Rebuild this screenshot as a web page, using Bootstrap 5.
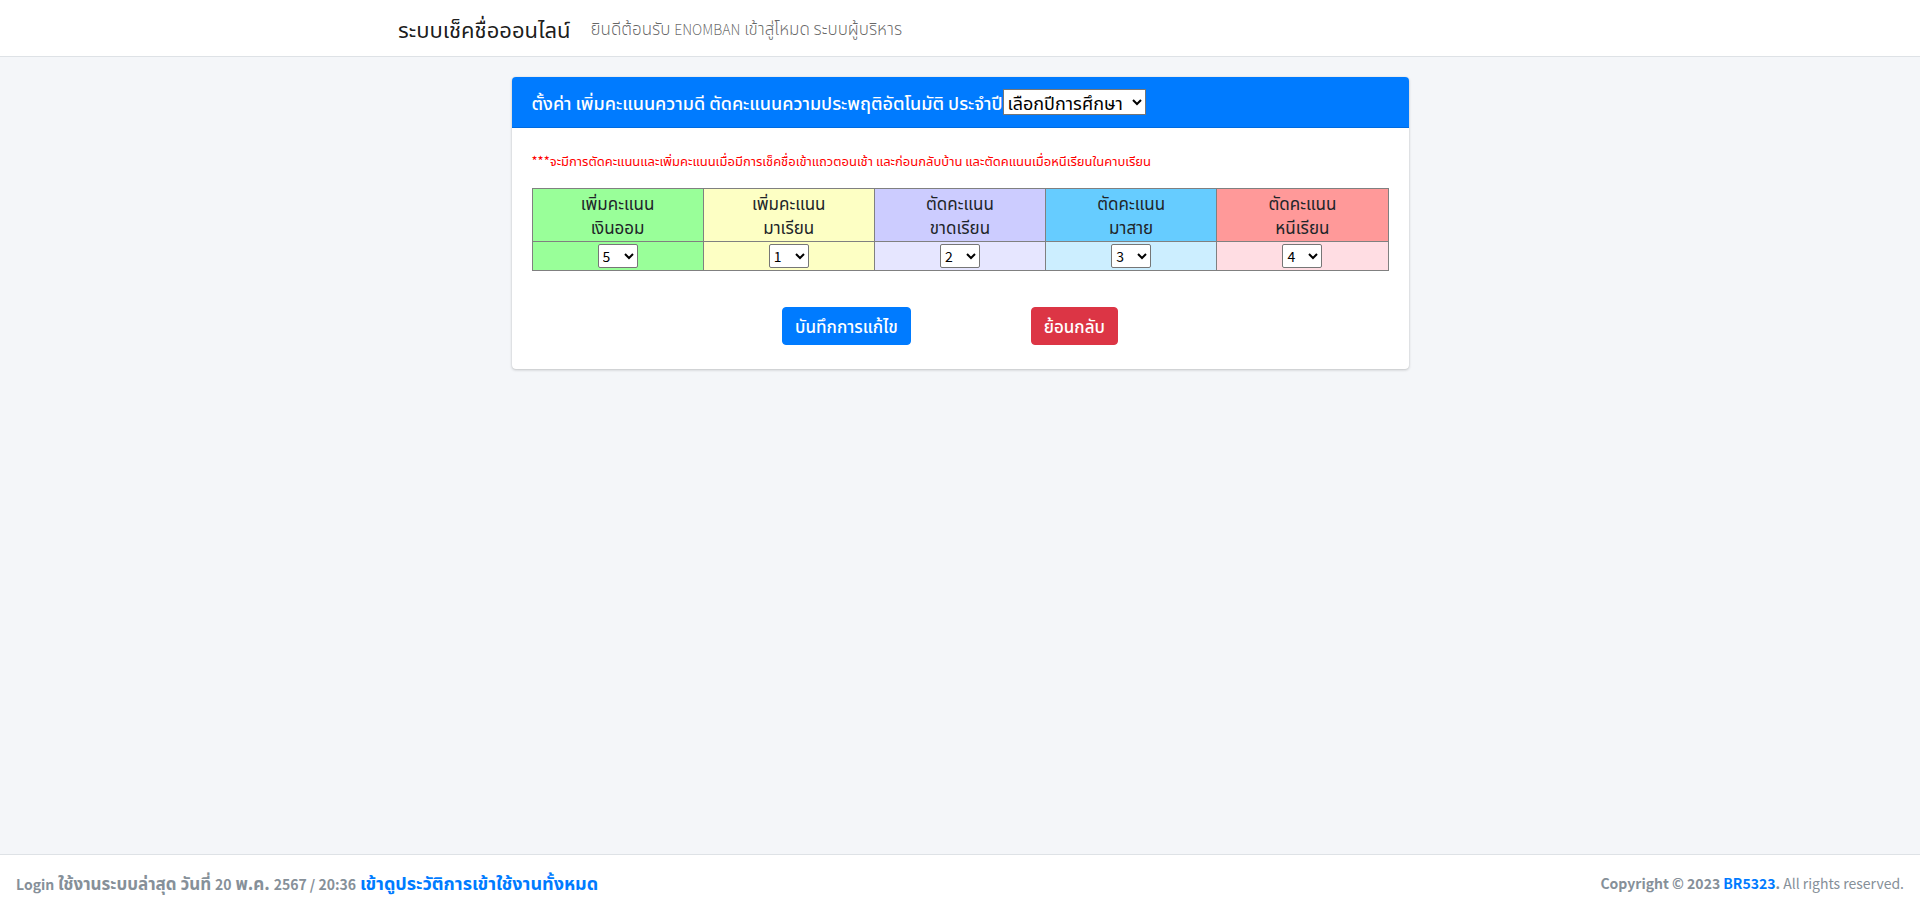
<!DOCTYPE html>
<html lang="th">
<head>
<meta charset="utf-8">
<meta name="viewport" content="width=device-width, initial-scale=1">
<title>ระบบเช็คชื่อออนไลน์</title>
<link rel="stylesheet" href="https://cdn.jsdelivr.net/npm/bootstrap@5.3.0/dist/css/bootstrap.min.css">
<style>
body{font-family:"Noto Sans CJK JP","Noto Sans Thai","Noto Sans",sans-serif;background:#f4f6f9;color:#212529;line-height:24px}
.top-bar{border-bottom:1px solid #dee2e6;min-height:57px}
.top-bar .container{max-width:1140px}
.top-bar .navbar-brand{font-size:22px;line-height:28px;color:rgba(0,0,0,.9);margin-right:20px}
.welcome{color:rgba(0,0,0,.6);font-size:17px;font-weight:300}
.latin{font-size:14px;line-height:1}
.score-card{max-width:897px;margin-top:20px;border:0;border-radius:4px;box-shadow:0 0 1px rgba(0,0,0,.13),0 1px 3px rgba(0,0,0,.2)}
.score-card .card-header{background:#007bff;color:#fff;padding:12px 20px;border-radius:4px 4px 0 0;border-bottom:1px solid rgba(0,0,0,.125)}
.score-card .card-body{padding:20px}
.score-card label{font-size:18px;font-weight:500;line-height:24px}
.year-pick,.score-pick{background:#fff;color:#000;border:1px solid #767676;border-radius:2px;padding:0}
.year-pick{font-family:"Noto Sans Thai","Noto Sans",sans-serif;font-size:18px;height:26px;width:143px;border-radius:0}
.score-pick{font-size:14px;height:24px;width:40px}
.note{font-size:13px;line-height:26px;color:#f00;margin-bottom:14px}
.score-table{table-layout:fixed;border-collapse:collapse}
.score-table th,.score-table td{border:1px solid #808080;padding:2px;text-align:center;font-size:17px;font-weight:400;line-height:24px}
.score-table td > select{display:block;margin:0 auto}
.green{background:#9f9}
.yellow{background:#fdffc4}
.violet{background:#ccf}
.violet-pale{background:#e6e6ff}
.blue{background:#6cf}
.blue-pale{background:#cef}
.red{background:#f99}
.red-pale{background:#ffdde3}
.actions .btn{font-size:17px;line-height:24px;padding:6px 12px;border-radius:4px;font-weight:500}
.actions{gap:120px;margin-top:36px;padding:0 20px 4px 0}
.btn-primary{--bs-btn-bg:#007bff;--bs-btn-border-color:#007bff}
.page-foot{border-top:1px solid #dee2e6;color:#869099;padding:16px}
.page-foot a{color:#007bff;text-decoration:none}
.last-login{font-size:17px;line-height:24px;max-height:24px}
.last-login a{font-size:18px;line-height:1}
.rights{font-size:14px}
</style>
</head>
<body class="d-flex flex-column min-vh-100">
<nav class="navbar navbar-expand top-bar bg-white p-0">
  <div class="container px-2">
    <a class="navbar-brand py-0" href="#">ระบบเช็คชื่อออนไลน์</a>
    <span class="welcome me-auto">ยินดีต้อนรับ <span class="latin">ENOMBAN</span> เข้าสู่โหมด ระบบผู้บริหาร</span>
  </div>
</nav>
<main class="flex-grow-1">
  <form class="card score-card mx-auto">
    <div class="card-header d-flex align-items-center">
      <label for="year">ตั้งค่า เพิ่มคะแนนความดี ตัดคะแนนความประพฤติอัตโนมัติ ประจำปี</label>
      <select id="year" class="year-pick"><option>เลือกปีการศึกษา</option></select>
    </div>
    <div class="card-body">
      <p class="note">***จะมีการตัดคะแนนและเพิ่มคะแนนเมื่อมีการเช็คชื่อเข้าแถวตอนเช้า และก่อนกลับบ้าน และตัดคแนนเมื่อหนีเรียนในคาบเรียน</p>
      <table class="score-table w-100">
        <thead>
          <tr>
            <th class="green" id="h1">เพิ่มคะแนน<br>เงินออม</th>
            <th class="yellow" id="h2">เพิ่มคะแนน<br>มาเรียน</th>
            <th class="violet" id="h3">ตัดคะแนน<br>ขาดเรียน</th>
            <th class="blue" id="h4">ตัดคะแนน<br>มาสาย</th>
            <th class="red" id="h5">ตัดคะแนน<br>หนีเรียน</th>
          </tr>
        </thead>
        <tbody>
          <tr>
            <td class="green"><select class="score-pick" aria-labelledby="h1"><option>5</option></select></td>
            <td class="yellow"><select class="score-pick" aria-labelledby="h2"><option>1</option></select></td>
            <td class="violet-pale"><select class="score-pick" aria-labelledby="h3"><option>2</option></select></td>
            <td class="blue-pale"><select class="score-pick" aria-labelledby="h4"><option>3</option></select></td>
            <td class="red-pale"><select class="score-pick" aria-labelledby="h5"><option>4</option></select></td>
          </tr>
        </tbody>
      </table>
      <div class="actions d-flex justify-content-center">
        <button type="submit" class="btn btn-primary">บันทึกการแก้ไข</button>
        <button type="button" class="btn btn-danger">ย้อนกลับ</button>
      </div>
    </div>
  </form>
</main>
<footer class="page-foot bg-white d-flex justify-content-between">
  <strong class="last-login"><span class="latin">Login</span> ใช้งานระบบล่าสุด วันที่ <span class="latin">20</span> พ.ค. <span class="latin">2567 / 20:36</span> <a href="#">เข้าดูประวัติการเข้าใช้งานทั้งหมด</a></strong>
  <span class="rights"><strong>Copyright © 2023 <a href="#">BR5323</a>.</strong> All rights reserved.</span>
</footer>
<script src="https://cdn.jsdelivr.net/npm/bootstrap@5.3.0/dist/js/bootstrap.bundle.min.js"></script>
</body>
</html>
